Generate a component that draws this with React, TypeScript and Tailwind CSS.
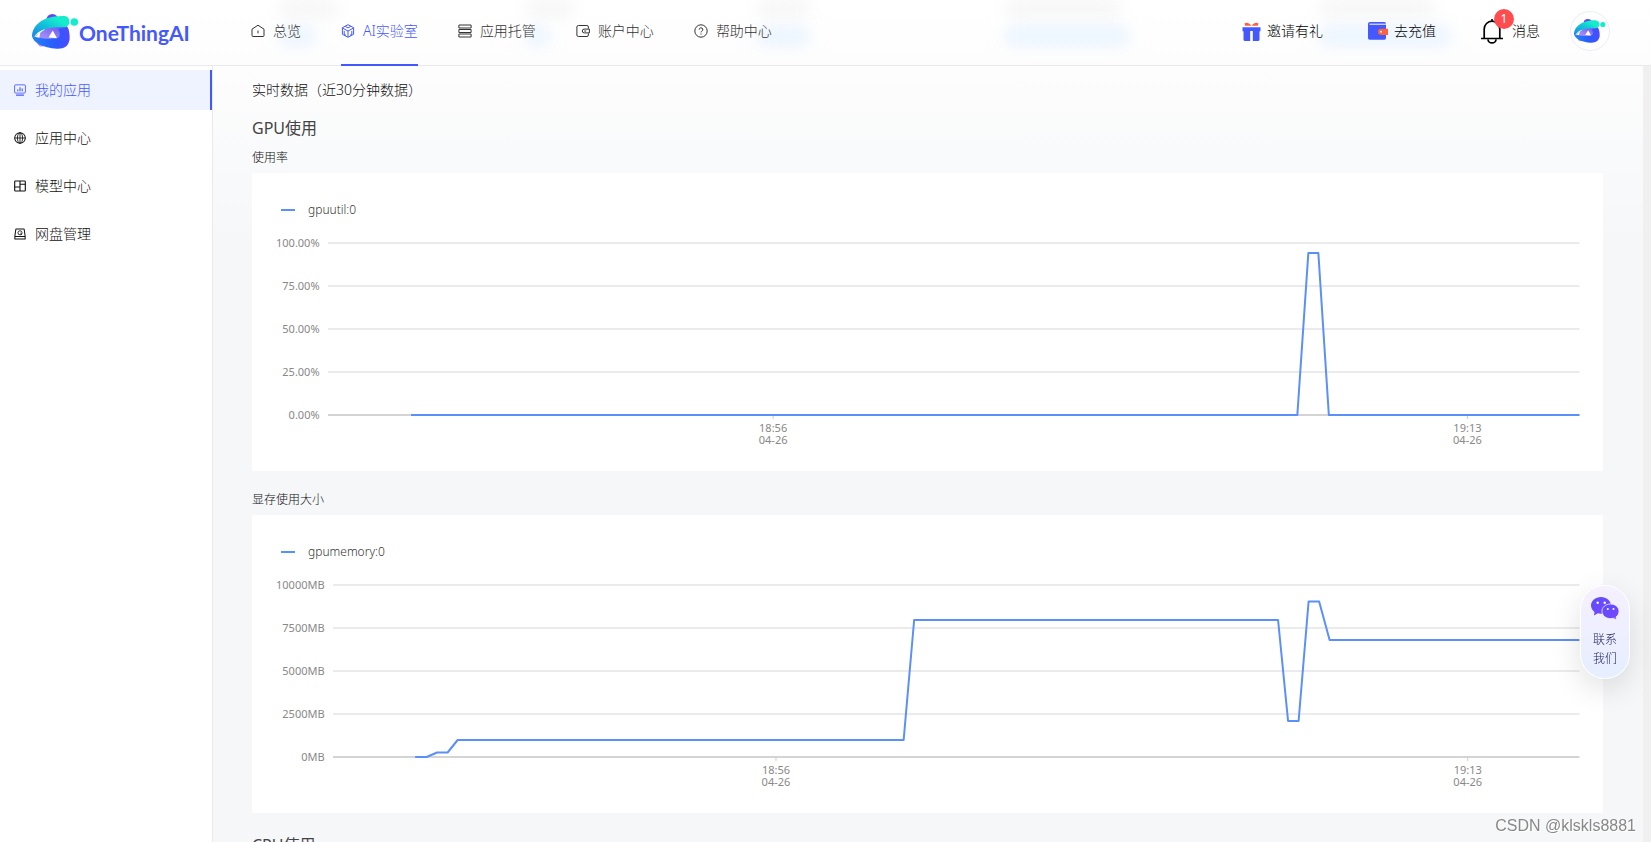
import { useId } from "react";
import type { ReactNode } from "react";

const Icon = ({ children, className = "size-[14px]" }: { children: ReactNode; className?: string }) => (
  <svg
    viewBox="0 0 14 14"
    className={`${className} shrink-0`}
    fill="none"
    stroke="currentColor"
    strokeWidth="1"
    strokeLinejoin="round"
    aria-hidden="true"
  >
    {children}
  </svg>
);

const HomeIcon = () => (
  <Icon>
    <path d="M1 5.200 7 1.200l6 4v6.300a1 1 0 0 1-1 1H2a1 1 0 0 1-1-1z" />
    <path d="M7 6.500v2.800" />
  </Icon>
);

const CubeIcon = () => (
  <Icon>
    <path d="m7 .7 5.600 3v6.600l-5.600 3-5.600-3V3.700z" />
    <path d="M1.400 4 7 7l5.600-3M7 7v6M4.200 2.300 7 3.900l2.800-1.600M3.200 7v3.300L5 11.400M10.800 7v3.300L9 11.400" />
  </Icon>
);

const StackIcon = () => (
  <Icon>
    <rect x=".9" y="1" width="12.2" height="3" />
    <rect x=".9" y="5.500" width="12.2" height="3" />
    <rect x=".9" y="10" width="12.2" height="3" />
  </Icon>
);

const WalletIcon = () => (
  <Icon>
    <path d="M12.400 4.600V3a1.500 1.500 0 0 0-1.500-1.500H2.400A1.500 1.500 0 0 0 .9 3v8a1.500 1.500 0 0 0 1.500 1.500h8.500a1.500 1.500 0 0 0 1.500-1.500V9.400" />
    <path d="M13.400 5.100H8.200a1.900 1.900 0 0 0 0 3.800h5.200zM8.200 7h2" />
  </Icon>
);

const HelpIcon = () => (
  <Icon>
    <circle cx="7" cy="7" r="6.200" />
    <path d="M5.200 5.600a1.800 1.800 0 1 1 2.600 1.600c-.6.3-.8.600-.8 1.200M7 9.500v1.100" />
  </Icon>
);

const AppIcon = () => (
  <Icon className="size-3">
    <rect x=".7" y="1" width="12.600" height="9.600" rx="1.200" />
    <path d="M2.400 13h9.200M4.400 8.400V6.400M7 8.400V3.800M9.600 8.400V5.200" strokeWidth="1.300" />
  </Icon>
);

const GlobeIcon = () => (
  <Icon className="size-3">
    <circle cx="7" cy="7" r="6.200" strokeWidth="1.200" />
    <ellipse cx="7" cy="7" rx="3" ry="6.200" />
    <path d="M1 7h12M7 1v12" />
  </Icon>
);

const ModelIcon = () => (
  <Icon className="size-3">
    <rect x=".8" y="1.200" width="12.400" height="11.600" rx=".8" strokeWidth="1.300" />
    <path d="M7 1.200v11.600M.8 8.200H7M7 5h6.200" strokeWidth="1.300" />
  </Icon>
);

const DiskIcon = () => (
  <Icon className="size-3">
    <path d="M2.200 1.200h9.600l1.200 8.200v3.400H1V9.400zM1 10h12" strokeWidth="1.200" />
    <circle cx="7" cy="5.600" r="2.400" />
    <path d="m7.400 5.800 2 2" />
  </Icon>
);

const LogoMark = ({ className }: { className: string }) => {
  const id = useId();
  return (
    <svg viewBox="0 0 47 35" className={className} aria-hidden="true">
      <defs>
        <linearGradient id={`${id}-teal`} x1="0" y1="1" x2="1" y2="0">
          <stop offset="0" stopColor="#1687e8" />
          <stop offset=".5" stopColor="#12c8d8" />
          <stop offset=".75" stopColor="#14edcb" />
        </linearGradient>
        <linearGradient id={`${id}-blue`} x1="0" y1="0" x2="1" y2="0">
          <stop offset="0" stopColor="#1f86f5" />
          <stop offset=".6" stopColor="#2a5bff" />
          <stop offset="1" stopColor="#4a4cff" />
        </linearGradient>
        <linearGradient id={`${id}-violet`} x1="0" y1="1" x2="1" y2="0">
          <stop offset="0" stopColor="#b9a2fa" />
          <stop offset="1" stopColor="#5b48f0" />
        </linearGradient>
      </defs>
      <circle cx="20.300" cy="6" r="6" fill="#6047ee" />
      <path d="M5 27c0 5 4 7 8 4.500L20 20 14 14z" fill={`url(#${id}-violet)`} />
      <path d="M3 22 17 13l17-1.500c3 2 4 8 3.400 15L20 26z" fill={`url(#${id}-violet)`} />
      <path
        d="M0 21.500c.5 7 11 12.500 25 13.200 7 .3 12-3 12.300-9 .2-5-.3-9-2.300-12.700l-9 2c3 4 2.500 9-2 9.300C18 25 8 25.500 0 21.500z"
        fill={`url(#${id}-blue)`}
      />
      <path d="m20.800 16.500 4.200 7.700-8.500-.7z" fill="#fff" />
      <path d="m3.800 22.500 4.800-4.700-1.300 5.400z" fill="#fff" />
      <path
        d="M0 22C0 14 7 7 15 4.300 21 2.300 28 1.600 32.500 2c3.200.300 5 2.700 4.900 5.700-.1 3.200-2.400 5.600-5.400 5.600C20 13.200 9 14.500 3.500 21c-1 1.300-3 2.600-3.500 1z"
        fill={`url(#${id}-teal)`}
      />
      <circle cx="42.300" cy="8" r="3.800" fill="#14edcb" />
    </svg>
  );
};

const GiftIcon = () => (
  <svg viewBox="0 0 19 19" className="size-[19px]" aria-hidden="true">
    <path d="M2.500 1.500c2-1.500 5-.2 7 2.500 2-2.700 5-4 7-2.500l-.6 2.200H3.100z" fill="#ff603d" />
    <path d="M.5 5.300h18v4h-1v8.200a1.500 1.500 0 0 1-1.500 1.500H3a1.500 1.500 0 0 1-1.500-1.500V9.300h-1z" fill="#4458ff" />
    <path d="M8.200 9h2.600v10H8.200z" fill="#fff" />
  </svg>
);

const RechargeIcon = () => (
  <svg viewBox="0 0 20 18" className="h-[18px] w-5" aria-hidden="true">
    <path d="M2 0h14.500a1.500 1.500 0 0 1 1.500 1.500V16a1.700 1.700 0 0 1-1.700 1.700H1.700A1.700 1.700 0 0 1 0 16V2a2 2 0 0 1 2-2z" fill="#4458ff" />
    <path d="M1.500 2.200H18" stroke="#fff" />
    <path d="M13 6.700h7v6.200h-7a3.100 3.100 0 0 1 0-6.200z" fill="#ff603d" />
    <circle cx="13" cy="9.800" r="1" fill="#fff" />
  </svg>
);

const BellIcon = () => (
  <svg viewBox="0 0 22 25" className="h-[25px] w-[22px]" fill="none" stroke="#000" strokeWidth="1.700" aria-hidden="true">
    <path d="M3.200 19.200V10a7.800 7.800 0 0 1 15.600 0v9.200M0 19.500h22M11 2.200V0M7 20.500a4 3.400 0 0 0 8 0" />
  </svg>
);

const WechatIcon = () => (
  <svg viewBox="0 0 28 23" className="h-[23px] w-7" aria-hidden="true">
    <defs>
      <linearGradient id="wechat" x1="0" y1="0" x2="1" y2="1">
        <stop offset="0" stopColor="#5b4dff" />
        <stop offset="1" stopColor="#7b46ff" />
      </linearGradient>
    </defs>
    <path d="M10 0C4.500 0 0 3.800 0 8.600c0 2.600 1.300 4.800 3.500 6.400L3 18.500l3.800-2.200c1 .3 2.100.5 3.200.5 5.500 0 10-3.800 10-8.300S15.500 0 10 0z" fill="url(#wechat)" />
    <path d="M19.500 7c-4.800 0-8.500 3.200-8.500 7.300s3.700 7.300 8.500 7.300c1 0 2-.2 2.900-.4l3.100 1.800-.5-3c1.900-1.400 3-3.400 3-5.700 0-4.100-3.700-7.300-8.500-7.300z" fill="url(#wechat)" stroke="#f3efff" strokeWidth=".8" />
    <g fill="#fff">
      <circle cx="6.700" cy="5.700" r="1.200" />
      <circle cx="13.700" cy="5.700" r="1.200" />
      <circle cx="16.800" cy="12" r="1" />
      <circle cx="22.500" cy="12" r="1" />
    </g>
  </svg>
);

const navItems = [
  { label: "总览", icon: <HomeIcon /> },
  { label: "AI实验室", icon: <CubeIcon />, active: true },
  { label: "应用托管", icon: <StackIcon /> },
  { label: "账户中心", icon: <WalletIcon /> },
  { label: "帮助中心", icon: <HelpIcon /> },
];

const sideItems = [
  { label: "我的应用", icon: <AppIcon />, active: true },
  { label: "应用中心", icon: <GlobeIcon /> },
  { label: "模型中心", icon: <ModelIcon /> },
  { label: "网盘管理", icon: <DiskIcon /> },
];

const HeaderGlow = () => (
  <div className="pointer-events-none absolute inset-0 -z-10 overflow-hidden" aria-hidden="true">
    <div className="absolute top-0 left-[17%] h-4 w-14 bg-neutral-100 blur-sm" />
    <div className="absolute top-7 left-[17%] h-4 w-8 bg-[#e6f2ff] blur-sm" />
    <div className="absolute top-0 left-[32%] h-4 w-11 bg-neutral-100 blur-sm" />
    <div className="absolute top-7 left-[32%] h-4 w-5 bg-[#e6f2ff] blur-sm" />
    <div className="absolute top-0 left-[46%] h-4 w-12 bg-neutral-100 blur-sm" />
    <div className="absolute top-7 left-[46%] h-4 w-12 bg-[#e6f2ff] blur-sm" />
    <div className="absolute top-0 left-[61%] h-4 w-28 bg-neutral-100 blur-sm" />
    <div className="absolute top-7 left-[61%] h-4 w-30 bg-[#e6f2ff] blur-sm" />
    <div className="absolute top-0 left-[80%] h-4 w-28 bg-neutral-100 blur-sm" />
    <div className="absolute top-7 left-[80%] h-4 w-32 bg-[#e6f2ff] blur-sm" />
  </div>
);

const Header = () => (
  <header className="relative z-10 flex h-[66px] shrink-0 items-center border-b border-[#e8eaec] bg-linear-to-b from-white to-[#fdfdfd] pb-[3px]">
    <HeaderGlow />
    <a href="#" className="flex w-[251px] shrink-0 items-center pl-8 text-[#4458ff]">
      <LogoMark className="h-[35px] w-[47px]" />
      <span className="pt-1 font-[Lato] text-[21px] leading-8 font-bold">OneThingAI</span>
    </a>
    <nav className="flex h-[66px] gap-10 self-start text-sm">
      {navItems.map((item) => (
        <a
          key={item.label}
          href="#"
          className={`flex items-center gap-2 border-b-2 pb-[2px] whitespace-nowrap ${
            item.active ? "border-[#4458ff] text-[#4458ff]" : "border-transparent text-[#333]"
          }`}
        >
          {item.icon}
          {item.label}
        </a>
      ))}
    </nav>
    <div className="ml-auto flex items-center pr-[41px] text-sm whitespace-nowrap text-black">
      <a href="#" className="mr-[45px] flex items-center gap-[6px]">
        <GiftIcon />
        邀请有礼
      </a>
      <a href="#" className="mr-[45px] flex items-center gap-[6px]">
        <RechargeIcon />
        去充值
      </a>
      <a href="#" className="mr-[30px] flex items-center gap-[9px]">
        <span className="relative">
          <BellIcon />
          <span className="absolute -top-[10px] -right-[11px] flex size-5 items-center justify-center rounded-full bg-[#ff4d4f] text-xs font-normal text-white">
            1
          </span>
        </span>
        消息
      </a>
      <button
        type="button"
        aria-label="OneThingAI"
        className="flex size-10 items-center justify-center rounded-full border border-[#ebedf7] bg-white"
      >
        <LogoMark className="h-6 w-8" />
      </button>
    </div>
  </header>
);

const Sidebar = () => (
  <aside className="w-[213px] shrink-0 border-r border-[#e8eaec] bg-white pt-1">
    <nav className="flex flex-col gap-2">
      {sideItems.map((item) => (
        <a
          key={item.label}
          href="#"
          className={`flex h-10 items-center gap-[9px] border-r-2 pl-[14px] text-sm ${
            item.active ? "border-[#4458ff] bg-[#eff3ff] text-[#4458ff]" : "border-transparent text-[#111]"
          }`}
        >
          {item.icon}
          {item.label}
        </a>
      ))}
    </nav>
  </aside>
);

type Chart = {
  title: string;
  series: string;
  labels: string[];
  width: number;
  ticks: { time: string; date: string; at: string }[];
  points: string;
};

const charts: Chart[] = [
  {
    title: "使用率",
    series: "gpuutil:0",
    labels: ["100.00%", "75.00%", "50.00%", "25.00%", "0.00%"],
    width: 1251,
    ticks: [
      { time: "18:56", date: "04-26", at: "35.57%" },
      { time: "19:13", date: "04-26", at: "91.05%" },
    ],
    points: "83,172 969,172 980,10 990,10 1000.5,172 1251,172",
  },
  {
    title: "显存使用大小",
    series: "gpumemory:0",
    labels: ["10000MB", "7500MB", "5000MB", "2500MB", "0MB"],
    width: 1245,
    ticks: [
      { time: "18:56", date: "04-26", at: "35.54%" },
      { time: "19:13", date: "04-26", at: "91.04%" },
    ],
    points:
      "82,172 93.500,172 104,167.500 114.500,167.500 124.500,155 570,155 580.500,35 944,35 954,136 964.500,136 974.500,16.500 985,16.500 995.500,55 1245,55",
  },
];

const ChartCard = ({ chart }: { chart: Chart }) => (
  <section className="mb-5">
    <h3 className="h-6 text-xs leading-[18px] text-[#111]">{chart.title}</h3>
    <div className="flex h-[298px] flex-col rounded-xs bg-white pt-7 pr-6 pl-6">
      <div className="flex h-[18px] items-center gap-[13px] pl-[5px] font-[Noto_Sans] text-xs text-[#333]">
        <span className="h-[2px] w-[14px] bg-[#5b8ff9]" />
        {chart.series}
      </div>
      <div className="mt-4 flex gap-2 font-[Noto_Sans] text-[11px] font-normal">
        <div className="flex flex-col gap-[27px] text-right leading-4 text-[#888]">
          {chart.labels.map((label) => (
            <span key={label}>{label}</span>
          ))}
        </div>
        <svg className="mt-2 h-[212px] min-w-0 flex-1 overflow-visible" role="img" aria-label={chart.series}>
          {chart.labels.map((label, i) => (
            <line
              key={label}
              x1="0"
              x2="100%"
              y1={i * 43}
              y2={i * 43}
              stroke={i === chart.labels.length - 1 ? "#d4d4d4" : "#ebebeb"}
              strokeWidth="2"
            />
          ))}
          {chart.ticks.map((tick) => (
            <g key={tick.at} fill="#888" textAnchor="middle">
              <line x1={tick.at} x2={tick.at} y1="172" y2="176" stroke="#ccc" />
              <text x={tick.at} y="189">{tick.time}</text>
              <text x={tick.at} y="201">{tick.date}</text>
            </g>
          ))}
          <svg width="100%" height="172" viewBox={`0 0 ${chart.width} 172`} preserveAspectRatio="none" overflow="visible">
            <polyline
              points={chart.points}
              fill="none"
              stroke="#5b8ff9"
              strokeWidth="2"
              strokeLinejoin="round"
              vectorEffect="non-scaling-stroke"
            />
          </svg>
        </svg>
      </div>
    </div>
  </section>
);

export default function App() {
  return (
    <div className="flex h-screen flex-col overflow-hidden bg-white font-['Noto_Sans','Noto_Sans_CJK_SC',sans-serif] font-light">
      <Header />
      <div className="flex min-h-0 flex-1">
        <Sidebar />
        <main className="min-w-0 flex-1 overflow-hidden bg-[#f5f7f9] bg-linear-to-b from-[#fdfdfd] to-[#f5f7f9] to-[180px] pr-10 pl-[39px]">
          <h1 className="pt-[13px] text-sm leading-[22px] text-[#111]">实时数据（近30分钟数据）</h1>
          <h2 className="mt-[15px] mb-[9px] text-base leading-6 font-normal text-[#444]">GPU使用</h2>
          {charts.map((chart) => (
            <ChartCard key={chart.series} chart={chart} />
          ))}
          <h2 className="text-base leading-6 font-normal text-[#444]">CPU使用</h2>
        </main>
        <div className="w-2 shrink-0 bg-[#f0f0f0]" />
      </div>

      <button
        type="button"
        className="fixed right-[21px] bottom-[163px] z-20 flex h-[94px] w-[50px] flex-col items-center rounded-full border border-white bg-linear-to-b from-[#f6f0ff] to-[#e6eeff] pt-[11px] text-xs leading-[19px] text-[#1a1a5e] shadow-[0_10px_30px_rgba(0,0,0,0.12)]"
      >
        <WechatIcon />
        <span className="mt-[10px] w-6">联系我们</span>
      </button>
      <p className="fixed right-[15px] bottom-1 z-20 font-['Liberation_Sans'] text-base leading-6 font-normal text-[#888] [text-shadow:1px_1px_0_white]">
        CSDN @klskls8881
      </p>
    </div>
  );
}
